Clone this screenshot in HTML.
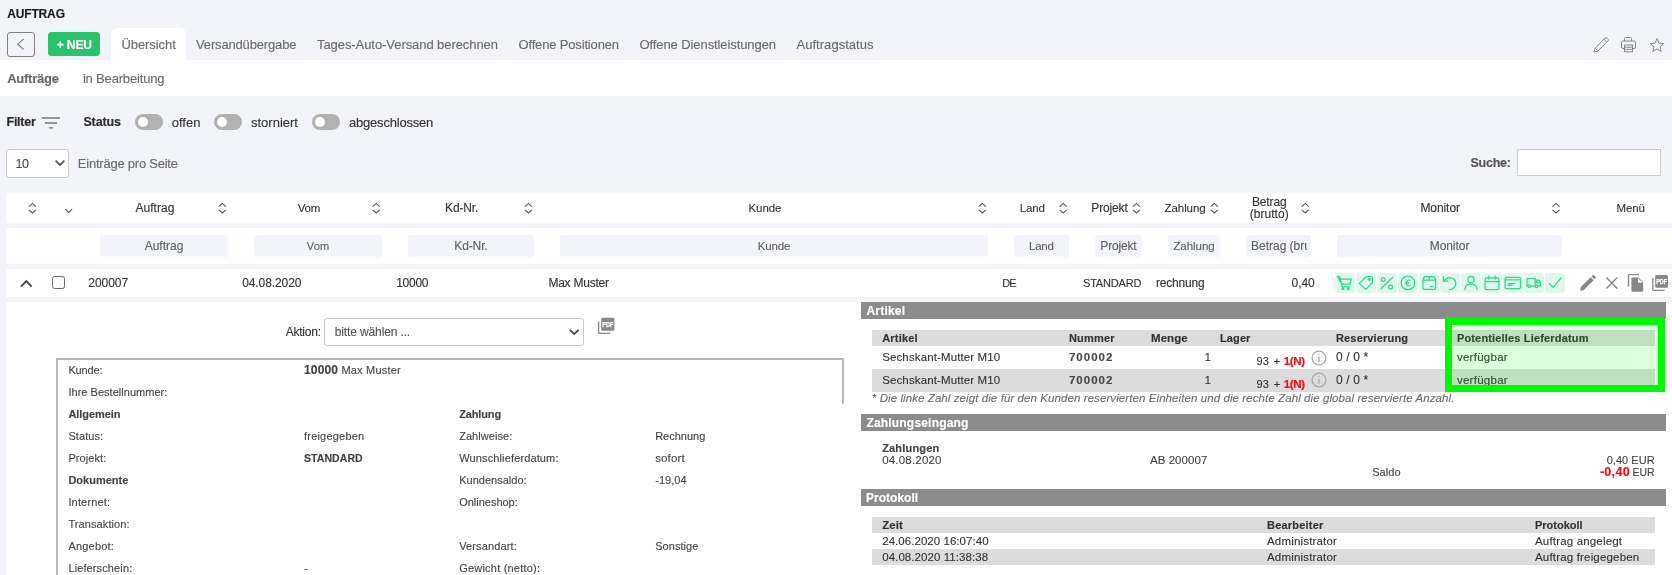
<!DOCTYPE html>
<html lang="de">
<head>
<meta charset="utf-8">
<title>Auftrag</title>
<style>
*{box-sizing:border-box;margin:0;padding:0}
html,body{width:1672px;height:575px;overflow:hidden;background:#f3f4fa;font-family:"Liberation Sans",sans-serif}
#pg{will-change:transform;position:relative;width:1672px;height:575px;overflow:hidden;background:#f3f4fa}
.b{position:absolute}
.w{position:absolute;background:#fff}
.t{position:absolute;white-space:pre;line-height:16px;height:16px;-webkit-text-stroke:0.12px}
.fi{position:absolute;background:#f3f4fa;border-radius:3px;height:22px;top:235px}
.tg{position:absolute;width:28px;height:16px;border-radius:8px;background:#b1b1b1;top:114px}
.tg i{position:absolute;left:3px;top:3px;width:10px;height:10px;border-radius:5px;background:#fff}
.bar{position:absolute;left:861px;width:804.6px;height:17px;background:#8c8c8c}
.gr{position:absolute;left:872px;width:783px;background:#dcdcdc}
.mi{position:absolute;top:273px;width:20px;height:20px;border-radius:3.5px;background:#e0f8ec}
.mi svg{position:absolute;left:0;top:0;width:20px;height:20px;fill:none;stroke:#2cda88;stroke-width:1.25;stroke-linecap:round;stroke-linejoin:round}
svg.s{position:absolute;overflow:visible}
</style>
</head>
<body>
<div id="pg">
<!-- top -->
<div class="w" style="left:111px;top:28px;width:75px;height:33px;border-radius:6px 6px 0 0"></div>
<div class="w" style="left:0;top:60px;width:1672px;height:36px"></div>
<div class="b" style="left:7px;top:32px;width:28px;height:25px;border:1px solid #808080;border-radius:3px"></div>
<svg class="s" style="left:7px;top:32px" width="28" height="25"><path d="M16.6 6.8 L10.8 12.2 L16.6 17.4" fill="none" stroke="#777" stroke-width="1.1"/></svg>
<div class="b" style="left:48px;top:32px;width:52px;height:24px;border-radius:3.5px;background:#28c36a"></div>
<!-- top-right icons -->
<svg class="s" style="left:1592px;top:36px" width="18" height="18" fill="none" stroke="#828282" stroke-width="0.95" stroke-linejoin="round"><path d="M2 16 L3.2 12.2 L13 2.2 Q14 1.3 15 2.2 L16 3.2 Q16.8 4.2 15.9 5.1 L5.9 15 Z M3.2 12.2 L5.9 15 M12 3.3 L14.9 6.1"/></svg>
<svg class="s" style="left:1620px;top:36px" width="18" height="18" fill="none" stroke="#828282" stroke-width="0.95" stroke-linejoin="round"><path d="M4.5 5 V2.5 Q4.5 1.5 5.5 1.5 H10.5 Q11.5 1.5 11.5 2.5 V5"/><rect x="1.5" y="5" width="14" height="7.5" rx="1.5"/><rect x="4.5" y="9" width="8" height="6.8" fill="#f3f4fa"/><path d="M4.5 11.2 H12.5 M4.5 13.4 H12.5"/></svg>
<svg class="s" style="left:1649px;top:37px" width="16" height="16" fill="none" stroke="#828282" stroke-width="0.95" stroke-linejoin="round"><path d="M8 1.6 L9.9 6.1 L14.7 6.5 L11 9.7 L12.2 14.5 L8 11.9 L3.8 14.5 L5 9.7 L1.3 6.5 L6.1 6.1 Z"/></svg>
<!-- filter line -->
<svg class="s" style="left:41px;top:115px" width="20" height="15" stroke="#777" stroke-width="1.3"><path d="M0.9 3 H19.1 M3.9 8 H16.1 M7.9 12.9 H12.1"/></svg>
<div class="tg" style="left:135px"><i></i></div>
<div class="tg" style="left:214px"><i></i></div>
<div class="tg" style="left:312px"><i></i></div>
<div class="w" style="left:6px;top:149px;width:63px;height:28.5px;border:1px solid #c9c9c9;border-radius:3px"></div>
<svg class="s" style="left:54px;top:158px" width="12" height="10" fill="none" stroke="#555" stroke-width="1.8"><path d="M1.6 2.6 L6 6.9 L10.4 2.6"/></svg>
<div class="w" style="left:1517px;top:149px;width:144px;height:27px;border:1px solid #cdcdcd;border-radius:0"></div>
<!-- table rows -->
<div class="w" style="left:6px;top:193px;width:1666px;height:30px"></div>
<div class="w" style="left:6px;top:228px;width:1666px;height:36px"></div>
<div class="w" style="left:6px;top:269px;width:1666px;height:28px"></div>
<div class="w" style="left:6px;top:302px;width:1666px;height:273px"></div>
<!-- sort icons -->
<svg class="s" style="left:0;top:193px" width="1672" height="30" fill="none" stroke="#555" stroke-width="1.1">
<path d="M65.3 16.2 L68.7 19.4 L72.1 16.2"/>
<path d="M29.0 13.6 l3.5 -3.2 l3.5 3.2 M29.0 16.8 l3.5 3.2 l3.5 -3.2"/><path d="M218.8 13.6 l3.5 -3.2 l3.5 3.2 M218.8 16.8 l3.5 3.2 l3.5 -3.2"/><path d="M372.7 13.6 l3.5 -3.2 l3.5 3.2 M372.7 16.8 l3.5 3.2 l3.5 -3.2"/><path d="M524.9 13.6 l3.5 -3.2 l3.5 3.2 M524.9 16.8 l3.5 3.2 l3.5 -3.2"/><path d="M978.8 13.6 l3.5 -3.2 l3.5 3.2 M978.8 16.8 l3.5 3.2 l3.5 -3.2"/><path d="M1059.7 13.6 l3.5 -3.2 l3.5 3.2 M1059.7 16.8 l3.5 3.2 l3.5 -3.2"/><path d="M1132.9 13.6 l3.5 -3.2 l3.5 3.2 M1132.9 16.8 l3.5 3.2 l3.5 -3.2"/><path d="M1210.8 13.6 l3.5 -3.2 l3.5 3.2 M1210.8 16.8 l3.5 3.2 l3.5 -3.2"/><path d="M1301.8 13.6 l3.5 -3.2 l3.5 3.2 M1301.8 16.8 l3.5 3.2 l3.5 -3.2"/><path d="M1552.5 13.6 l3.5 -3.2 l3.5 3.2 M1552.5 16.8 l3.5 3.2 l3.5 -3.2"/>
</svg>
<!-- filter inputs -->
<div class="fi" style="left:100px;width:128px"></div>
<div class="fi" style="left:254px;width:128px"></div>
<div class="fi" style="left:408px;width:126px"></div>
<div class="fi" style="left:560px;width:428px"></div>
<div class="fi" style="left:1014px;width:55px"></div>
<div class="fi" style="left:1095px;width:47px"></div>
<div class="fi" style="left:1168px;width:52px"></div>
<div class="fi" style="left:1246px;width:65px"></div>
<div class="fi" style="left:1337px;width:225px"></div>
<!-- data row -->
<svg class="s" style="left:18px;top:277px" width="16" height="12" fill="none" stroke="#444" stroke-width="1.9"><path d="M2.9 9.6 L8.3 4.2 L13.7 9.6"/></svg>
<div class="w" style="left:52px;top:275.5px;width:13px;height:13px;border:1px solid #6b6b6b;border-radius:2.5px"></div>
<div class="mi" style="left:1335px"><svg viewBox="0 0 20 20"><path d="M2.7 3.4 H4.3 L5.3 6.1 H16.3 L15.3 11.2 H6.6 Z M5.3 6.1 L6.6 11.2 L6.9 13.8 H14.9"/><circle cx="7.9" cy="15.7" r="0.9"/><circle cx="13.3" cy="15.7" r="0.9"/></svg></div>
<div class="mi" style="left:1356px"><svg viewBox="0 0 20 20"><path d="M3.3 10.4 L10 3.6 H15.6 Q16.4 3.6 16.4 4.4 V9.6 L9.9 16.4 Z"/><circle cx="13.4" cy="6.5" r="0.8"/></svg></div>
<div class="mi" style="left:1377px"><svg viewBox="0 0 20 20"><path d="M4 15.7 L15.8 4.3"/><circle cx="6.2" cy="6.5" r="1.9"/><circle cx="13.6" cy="14" r="1.9"/></svg></div>
<div class="mi" style="left:1398px"><svg viewBox="0 0 20 20"><circle cx="9.9" cy="9.9" r="6.8"/><path d="M12 7.6 Q10.9 6.6 9.6 7.2 Q8.3 8 8.3 9.9 Q8.3 11.8 9.6 12.6 Q10.9 13.2 12 12.2 M7.2 9.2 H10.6 M7.2 10.7 H10.6" stroke-width="1.1"/></svg></div>
<div class="mi" style="left:1419px"><svg viewBox="0 0 20 20"><path d="M3.9 7.2 L5.2 3.6 H15.3 L16.6 7.2 V15.6 Q16.6 16.4 15.8 16.4 H4.7 Q3.9 16.4 3.9 15.6 Z M3.9 7.2 H16.6 M10.2 3.6 V7.2 M11.6 13.6 H14.2"/></svg></div>
<div class="mi" style="left:1440px"><svg viewBox="0 0 20 20"><path d="M3.4 3.6 V8.2 H8 M3.8 8 Q6.5 4.4 10.2 4.6 Q15.6 5.2 15.8 10.4 Q15.6 15.6 9.6 16.6"/></svg></div>
<div class="mi" style="left:1461px"><svg viewBox="0 0 20 20"><circle cx="10" cy="6.6" r="3.2"/><path d="M4 16.6 Q4.2 11 10 10.8 Q15.8 11 16 16.6"/></svg></div>
<div class="mi" style="left:1482px"><svg viewBox="0 0 20 20"><rect x="3.1" y="4.9" width="13.8" height="11.7" rx="1.6"/><path d="M3.1 8.5 H16.9 M6.8 3.1 V6.2 M13.2 3.1 V6.2"/></svg></div>
<div class="mi" style="left:1503px"><svg viewBox="0 0 20 20"><rect x="2.1" y="4.4" width="15.4" height="11.2" rx="1.4"/><path d="M2.1 6.9 H17.5 M5 10.5 H11.6 M5 12.4 H9"/></svg></div>
<div class="mi" style="left:1524px"><svg viewBox="0 0 20 20"><path d="M4 13 H3 V6.2 Q3 5.5 3.7 5.5 H11.2 V13 H6.6 M11.2 7 H14.6 L16.6 9.6 V13 H14 M11.2 13 H11.4 M12.6 7.4 V9.8 H16.2"/><circle cx="5.3" cy="13.2" r="1.3"/><circle cx="12.7" cy="13.2" r="1.3"/></svg></div>
<div class="mi" style="left:1545px"><svg viewBox="0 0 20 20"><path d="M4.4 10.6 L8.2 14.4 L16.2 4.9"/></svg></div>
<svg class="s" style="left:1578px;top:272px" width="92" height="22" fill="#888" stroke="none">
<path d="M2.2 17.6 L2.8 15 L12.6 5.2 L15.6 8.2 L5.8 18 L3.2 18.7 Q2 18.9 2.2 17.6 Z M13.4 4.4 L14.6 3.2 Q15.3 2.6 16 3.2 L17.5 4.7 Q18.1 5.4 17.5 6.1 L16.4 7.3 Z"/>
<path d="M28.4 5.4 L39.3 16.6 M39.3 5.4 L28.4 16.6" fill="none" stroke="#888" stroke-width="1.4"/>
<path d="M50.5 14.8 V3.6 Q50.5 2.6 51.5 2.6 H60.8" fill="none" stroke="#888" stroke-width="1.4"/>
<path d="M54.6 5.4 H60.4 L65.2 10.2 V18.6 Q65.2 19.8 64 19.8 H54.6 Q53.4 19.8 53.4 18.6 V6.6 Q53.4 5.4 54.6 5.4 Z"/>
<path d="M60 6.2 V10.8 H64.6 Z" fill="#fff"/>
<path d="M74.8 6.2 V17.4 Q74.8 18.4 75.8 18.4 H86.6" fill="none" stroke="#888" stroke-width="1.4"/>
<rect x="77.2" y="3" width="12.8" height="12.8" rx="1.2"/>
<text x="83.65" y="11.8" font-family="Liberation Sans, sans-serif" font-size="6.6" font-weight="700" fill="#fff" stroke="#fff" stroke-width="0.25" text-anchor="middle" textLength="11" lengthAdjust="spacingAndGlyphs">PDF</text>
</svg>
<svg class="s" style="left:596px;top:315px" width="22" height="22" fill="#888" stroke="none">
<path d="M2.6 6.6 V17.4 Q2.6 18.4 3.6 18.4 H14.2" fill="none" stroke="#888" stroke-width="1.4"/>
<rect x="5.2" y="2.8" width="13.2" height="13" rx="1.2"/>
<text x="11.8" y="11.6" font-family="Liberation Sans, sans-serif" font-size="6.6" font-weight="700" fill="#fff" stroke="#fff" stroke-width="0.25" text-anchor="middle" textLength="11" lengthAdjust="spacingAndGlyphs">PDF</text>
</svg>
<!-- detail left -->
<div class="w" style="left:324px;top:318px;width:259.5px;height:27.5px;border:1px solid #c9c9c9;border-radius:3px"></div>
<svg class="s" style="left:568px;top:327px" width="12" height="10" fill="none" stroke="#444" stroke-width="1.8"><path d="M1.8 2.8 L6.2 7 L10.6 2.8"/></svg>
<div class="b" style="left:56px;top:358px;width:788px;height:2px;background:#b7b7b7"></div>
<div class="b" style="left:56px;top:358px;width:2px;height:217px;background:#b7b7b7"></div>
<div class="b" style="left:842px;top:358px;width:2px;height:45.5px;background:#b7b7b7"></div>
<!-- detail right -->
<div class="bar" style="top:302px"></div>
<div class="bar" style="top:414px"></div>
<div class="bar" style="top:489px"></div>
<div class="gr" style="top:330px;height:16px"></div>
<div class="gr" style="top:369px;height:22.5px"></div>
<div class="gr" style="top:517px;height:16px"></div>
<div class="gr" style="top:549px;height:15.5px"></div>
<svg class="s" style="left:1310.5px;top:349.5px" width="16" height="16" fill="none" stroke="#a8a8a8" stroke-width="1.3"><circle cx="8" cy="8" r="6.9"/><path d="M8 6.5 V11.8" stroke-width="1.3"/><circle cx="8" cy="4.6" r="0.7" fill="#aaa" stroke="none"/></svg>
<svg class="s" style="left:1310.5px;top:372.4px" width="16" height="16" fill="none" stroke="#a8a8a8" stroke-width="1.3"><circle cx="8" cy="8" r="6.9"/><path d="M8 6.5 V11.8" stroke-width="1.3"/><circle cx="8" cy="4.6" r="0.7" fill="#aaa" stroke="none"/></svg>
<span class="t" style="left:7.2px;top:6px;font-size:12px;color:#1c1c1c;font-weight:700;-webkit-text-stroke:0.15px;letter-spacing:-0.145px;">AUFTRAG</span>
<span class="t" style="left:121.5px;top:37px;font-size:13px;color:#6a6a6a;letter-spacing:-0.078px;">Übersicht</span>
<span class="t" style="left:196.0px;top:37px;font-size:13px;color:#6a6a6a;letter-spacing:-0.154px;">Versandübergabe</span>
<span class="t" style="left:317.0px;top:37px;font-size:13px;color:#6a6a6a;letter-spacing:-0.069px;">Tages-Auto-Versand berechnen</span>
<span class="t" style="left:518.5px;top:37px;font-size:13px;color:#6a6a6a;letter-spacing:-0.164px;">Offene Positionen</span>
<span class="t" style="left:639.5px;top:37px;font-size:13px;color:#6a6a6a;letter-spacing:-0.092px;">Offene Dienstleistungen</span>
<span class="t" style="left:796.5px;top:37px;font-size:13px;color:#6a6a6a;letter-spacing:0.033px;">Auftragstatus</span>
<span class="t" style="left:56.7px;top:37px;font-size:12px;color:#fff;font-weight:700;-webkit-text-stroke:0.15px;letter-spacing:-0.097px;">+ NEU</span>
<span class="t" style="left:7.2px;top:71px;font-size:13px;color:#6a6a6a;font-weight:700;-webkit-text-stroke:0.15px;letter-spacing:-0.250px;">Aufträge</span>
<span class="t" style="left:82.9px;top:71px;font-size:13px;color:#6a6a6a;letter-spacing:-0.173px;">in Bearbeitung</span>
<span class="t" style="left:6.5px;top:114px;font-size:12.5px;color:#2a2a2a;font-weight:700;-webkit-text-stroke:0.15px;letter-spacing:-0.252px;">Filter</span>
<span class="t" style="left:83.4px;top:114px;font-size:12.5px;color:#2a2a2a;font-weight:700;-webkit-text-stroke:0.15px;letter-spacing:-0.121px;">Status</span>
<span class="t" style="left:171.7px;top:115px;font-size:13px;color:#333;letter-spacing:0.028px;">offen</span>
<span class="t" style="left:251.0px;top:115px;font-size:13px;color:#333;">storniert</span>
<span class="t" style="left:349.0px;top:115px;font-size:13px;color:#333;letter-spacing:-0.203px;">abgeschlossen</span>
<span class="t" style="left:15.6px;top:156px;font-size:12.5px;color:#4a4a4a;letter-spacing:-0.506px;">10</span>
<span class="t" style="left:77.8px;top:156px;font-size:13px;color:#6a6a6a;letter-spacing:-0.228px;">Einträge pro Seite</span>
<span class="t" style="left:1470.5px;top:155px;font-size:12.5px;color:#555;font-weight:700;-webkit-text-stroke:0.15px;letter-spacing:-0.237px;">Suche:</span>
<span class="t" style="left:135.4px;top:200px;font-size:12px;color:#333;letter-spacing:0.049px;">Auftrag</span>
<span class="t" style="left:297.7px;top:200px;font-size:11.5px;color:#333;letter-spacing:-0.208px;">Vom</span>
<span class="t" style="left:445.0px;top:200px;font-size:12px;color:#333;letter-spacing:-0.123px;">Kd-Nr.</span>
<span class="t" style="left:748.5px;top:200px;font-size:11.5px;color:#333;letter-spacing:-0.091px;">Kunde</span>
<span class="t" style="left:1019.7px;top:200px;font-size:11.5px;color:#333;letter-spacing:-0.098px;">Land</span>
<span class="t" style="left:1091.3px;top:200px;font-size:12px;color:#333;letter-spacing:-0.143px;">Projekt</span>
<span class="t" style="left:1164.6px;top:200px;font-size:11.5px;color:#333;letter-spacing:-0.094px;">Zahlung</span>
<span class="t" style="left:1420.4px;top:200px;font-size:12px;color:#333;letter-spacing:-0.069px;">Monitor</span>
<span class="t" style="left:1616.5px;top:200px;font-size:11.5px;color:#333;letter-spacing:-0.094px;">Menü</span>
<span class="t" style="left:1251.9px;top:194px;font-size:12px;color:#333;letter-spacing:-0.112px;">Betrag</span>
<span class="t" style="left:1249.8px;top:206px;font-size:12px;color:#333;letter-spacing:0.030px;">(brutto)</span>
<span class="t" style="left:144.7px;top:238px;font-size:12px;color:#606060;">Auftrag</span>
<span class="t" style="left:306.8px;top:238px;font-size:11px;color:#606060;letter-spacing:0.192px;">Vom</span>
<span class="t" style="left:454.3px;top:238px;font-size:12px;color:#606060;letter-spacing:-0.123px;">Kd-Nr.</span>
<span class="t" style="left:757.7px;top:238px;font-size:11.5px;color:#606060;letter-spacing:-0.166px;">Kunde</span>
<span class="t" style="left:1029.0px;top:238px;font-size:11.5px;color:#606060;letter-spacing:-0.231px;">Land</span>
<span class="t" style="left:1100.3px;top:238px;font-size:12px;color:#606060;letter-spacing:-0.160px;">Projekt</span>
<span class="t" style="left:1173.3px;top:238px;font-size:11.5px;color:#606060;letter-spacing:-0.027px;">Zahlung</span>
<span class="t" style="left:1429.7px;top:238px;font-size:12px;color:#606060;letter-spacing:-0.053px;">Monitor</span>
<span class="t" style="left:1251.1px;top:238px;font-size:12px;color:#606060;letter-spacing:-0.027px;width:56px;overflow:hidden;">Betrag (brutto)</span>
<span class="t" style="left:88.3px;top:275px;font-size:12px;color:#333;letter-spacing:-0.049px;">200007</span>
<span class="t" style="left:242.2px;top:275px;font-size:12px;color:#333;letter-spacing:-0.096px;">04.08.2020</span>
<span class="t" style="left:396.2px;top:275px;font-size:12px;color:#333;letter-spacing:-0.269px;">10000</span>
<span class="t" style="left:548.4px;top:275px;font-size:12px;color:#333;letter-spacing:-0.232px;">Max Muster</span>
<span class="t" style="left:1083.0px;top:275px;font-size:11px;color:#333;letter-spacing:-0.186px;">STANDARD</span>
<span class="t" style="left:1156.0px;top:275px;font-size:12px;color:#333;letter-spacing:-0.192px;">rechnung</span>
<span class="t" style="left:1291.6px;top:275px;font-size:12px;color:#333;letter-spacing:-0.053px;">0,40</span>
<span class="t" style="left:1002.2px;top:275px;font-size:11px;color:#333;letter-spacing:-0.981px;">DE</span>
<span class="t" style="left:285.7px;top:324px;font-size:12px;color:#333;letter-spacing:-0.231px;">Aktion:</span>
<span class="t" style="left:334.8px;top:324px;font-size:12px;color:#555;letter-spacing:-0.133px;">bitte wählen ...</span>
<span class="t" style="left:68.4px;top:362px;font-size:11px;color:#444;letter-spacing:-0.135px;">Kunde:</span>
<span class="t" style="left:68.4px;top:384px;font-size:11px;color:#444;letter-spacing:0.031px;">Ihre Bestellnummer:</span>
<span class="t" style="left:68.4px;top:406px;font-size:11px;color:#444;font-weight:700;-webkit-text-stroke:0.15px;letter-spacing:-0.072px;">Allgemein</span>
<span class="t" style="left:68.4px;top:428px;font-size:11px;color:#444;letter-spacing:0.075px;">Status:</span>
<span class="t" style="left:68.4px;top:450px;font-size:11px;color:#444;letter-spacing:0.072px;">Projekt:</span>
<span class="t" style="left:68.4px;top:472px;font-size:11px;color:#444;font-weight:700;-webkit-text-stroke:0.15px;">Dokumente</span>
<span class="t" style="left:68.4px;top:494px;font-size:11px;color:#444;letter-spacing:0.168px;">Internet:</span>
<span class="t" style="left:68.4px;top:516px;font-size:11px;color:#444;letter-spacing:0.098px;">Transaktion:</span>
<span class="t" style="left:68.4px;top:538px;font-size:11px;color:#444;letter-spacing:0.208px;">Angebot:</span>
<span class="t" style="left:68.4px;top:560px;font-size:11px;color:#444;letter-spacing:0.119px;">Lieferschein:</span>
<span class="t" style="left:304.0px;top:362px;font-size:12px;color:#444;font-weight:700;-webkit-text-stroke:0.15px;letter-spacing:0.156px;">10000</span>
<span class="t" style="left:341.4px;top:362px;font-size:11px;color:#444;letter-spacing:0.215px;">Max Muster</span>
<span class="t" style="left:304.0px;top:428px;font-size:11px;color:#444;letter-spacing:0.209px;">freigegeben</span>
<span class="t" style="left:304.0px;top:450px;font-size:10.5px;color:#444;font-weight:700;-webkit-text-stroke:0.15px;letter-spacing:0.080px;">STANDARD</span>
<span class="t" style="left:304.3px;top:560px;font-size:11px;color:#444;">-</span>
<span class="t" style="left:459.2px;top:406px;font-size:11px;color:#444;font-weight:700;-webkit-text-stroke:0.15px;letter-spacing:-0.130px;">Zahlung</span>
<span class="t" style="left:459.2px;top:428px;font-size:11px;color:#444;letter-spacing:0.047px;">Zahlweise:</span>
<span class="t" style="left:459.2px;top:450px;font-size:11px;color:#444;letter-spacing:0.134px;">Wunschlieferdatum:</span>
<span class="t" style="left:459.2px;top:472px;font-size:11px;color:#444;letter-spacing:0.011px;">Kundensaldo:</span>
<span class="t" style="left:459.2px;top:494px;font-size:11px;color:#444;letter-spacing:-0.012px;">Onlineshop:</span>
<span class="t" style="left:459.2px;top:538px;font-size:11px;color:#444;letter-spacing:0.133px;">Versandart:</span>
<span class="t" style="left:459.2px;top:560px;font-size:11px;color:#444;letter-spacing:0.211px;">Gewicht (netto):</span>
<span class="t" style="left:655.2px;top:428px;font-size:11px;color:#444;letter-spacing:-0.008px;">Rechnung</span>
<span class="t" style="left:655.2px;top:450px;font-size:11.5px;color:#444;letter-spacing:0.127px;">sofort</span>
<span class="t" style="left:655.2px;top:472px;font-size:11px;color:#444;letter-spacing:0.039px;">-19,04</span>
<span class="t" style="left:655.2px;top:538px;font-size:11px;color:#444;letter-spacing:0.055px;">Sonstige</span>
<span class="t" style="left:866.4px;top:303px;font-size:12px;color:#fff;font-weight:700;-webkit-text-stroke:0.15px;letter-spacing:0.223px;">Artikel</span>
<span class="t" style="left:866.4px;top:415px;font-size:12px;color:#fff;font-weight:700;-webkit-text-stroke:0.15px;letter-spacing:0.190px;">Zahlungseingang</span>
<span class="t" style="left:866.1px;top:490px;font-size:12px;color:#fff;font-weight:700;-webkit-text-stroke:0.15px;">Protokoll</span>
<span class="t" style="left:882.2px;top:330px;font-size:11px;color:#333;font-weight:700;-webkit-text-stroke:0.15px;letter-spacing:0.208px;">Artikel</span>
<span class="t" style="left:1068.9px;top:330px;font-size:11px;color:#333;font-weight:700;-webkit-text-stroke:0.15px;letter-spacing:0.215px;">Nummer</span>
<span class="t" style="left:1151.0px;top:330px;font-size:11.5px;color:#333;font-weight:700;-webkit-text-stroke:0.15px;letter-spacing:0.070px;">Menge</span>
<span class="t" style="left:1220.0px;top:330px;font-size:11px;color:#333;font-weight:700;-webkit-text-stroke:0.15px;letter-spacing:0.108px;">Lager</span>
<span class="t" style="left:1336.0px;top:330px;font-size:11px;color:#333;font-weight:700;-webkit-text-stroke:0.15px;letter-spacing:0.153px;">Reservierung</span>
<span class="t" style="left:1456.9px;top:330px;font-size:11px;color:#333;font-weight:700;-webkit-text-stroke:0.15px;letter-spacing:0.167px;">Potentielles Lieferdatum</span>
<span class="t" style="left:882.2px;top:349px;font-size:11.5px;color:#333;letter-spacing:0.122px;">Sechskant-Mutter M10</span>
<span class="t" style="left:1068.9px;top:349px;font-size:11.5px;color:#484848;font-weight:700;-webkit-text-stroke:0.15px;letter-spacing:1.025px;">700002</span>
<span class="t" style="left:1204.7px;top:349px;font-size:11px;color:#333;">1</span>
<span class="t" style="left:1256.5px;top:353px;font-size:11px;color:#333;letter-spacing:0.250px;">93</span>
<span class="t" style="left:1273.7px;top:353px;font-size:11px;color:#333;">+</span>
<span class="t" style="left:1283.8px;top:353px;font-size:11.5px;color:#fb0a12;font-weight:700;-webkit-text-stroke:0.15px;letter-spacing:-0.325px;">1(N)</span>
<span class="t" style="left:1336.0px;top:349px;font-size:12px;color:#333;letter-spacing:0.140px;">0 / 0 *</span>
<span class="t" style="left:1456.9px;top:349px;font-size:11.5px;color:#333;letter-spacing:0.276px;">verfügbar</span>
<span class="t" style="left:882.2px;top:372px;font-size:11.5px;color:#333;letter-spacing:0.122px;">Sechskant-Mutter M10</span>
<span class="t" style="left:1068.9px;top:372px;font-size:11.5px;color:#484848;font-weight:700;-webkit-text-stroke:0.15px;letter-spacing:1.025px;">700002</span>
<span class="t" style="left:1204.7px;top:372px;font-size:11px;color:#333;">1</span>
<span class="t" style="left:1256.5px;top:376px;font-size:11px;color:#333;letter-spacing:0.250px;">93</span>
<span class="t" style="left:1273.7px;top:376px;font-size:11px;color:#333;">+</span>
<span class="t" style="left:1283.8px;top:376px;font-size:11.5px;color:#fb0a12;font-weight:700;-webkit-text-stroke:0.15px;letter-spacing:-0.325px;">1(N)</span>
<span class="t" style="left:1336.0px;top:372px;font-size:12px;color:#333;letter-spacing:0.140px;">0 / 0 *</span>
<span class="t" style="left:1456.9px;top:372px;font-size:11.5px;color:#333;letter-spacing:0.276px;">verfügbar</span>
<span class="t" style="left:871.8px;top:390px;font-size:11.5px;color:#6c6c6c;font-style:italic;letter-spacing:0.084px;">* Die linke Zahl zeigt die für den Kunden reservierten Einheiten und die rechte Zahl die global reservierte Anzahl.</span>
<span class="t" style="left:882.2px;top:440px;font-size:11px;color:#444;font-weight:700;-webkit-text-stroke:0.15px;letter-spacing:0.174px;">Zahlungen</span>
<span class="t" style="left:882.2px;top:452px;font-size:11.5px;color:#444;letter-spacing:0.193px;">04.08.2020</span>
<span class="t" style="left:1150.0px;top:452px;font-size:11.5px;color:#444;letter-spacing:0.047px;">AB 200007</span>
<span class="t" style="left:1372.2px;top:464px;font-size:11px;color:#444;letter-spacing:0.090px;">Saldo</span>
<span class="t" style="left:1606.7px;top:452px;font-size:11px;color:#444;letter-spacing:0.028px;">0,40 EUR</span>
<span class="t" style="left:1599.9px;top:464px;font-size:12.5px;color:#fb0a12;font-weight:700;-webkit-text-stroke:0.15px;letter-spacing:0.300px;">-0,40</span>
<span class="t" style="left:1632.6px;top:464px;font-size:10.5px;color:#444;letter-spacing:-0.086px;">EUR</span>
<span class="t" style="left:882.2px;top:517px;font-size:11.5px;color:#333;font-weight:700;-webkit-text-stroke:0.15px;letter-spacing:0.082px;">Zeit</span>
<span class="t" style="left:882.2px;top:533px;font-size:11.5px;color:#333;letter-spacing:0.048px;">24.06.2020 16:07:40</span>
<span class="t" style="left:882.2px;top:549px;font-size:11.5px;color:#333;letter-spacing:0.068px;">04.08.2020 11:38:38</span>
<span class="t" style="left:1267.0px;top:517px;font-size:11px;color:#333;font-weight:700;-webkit-text-stroke:0.15px;letter-spacing:0.209px;">Bearbeiter</span>
<span class="t" style="left:1267.0px;top:533px;font-size:11.5px;color:#333;letter-spacing:0.179px;">Administrator</span>
<span class="t" style="left:1267.0px;top:549px;font-size:11.5px;color:#333;letter-spacing:0.179px;">Administrator</span>
<span class="t" style="left:1535.0px;top:517px;font-size:11px;color:#333;font-weight:700;-webkit-text-stroke:0.15px;">Protokoll</span>
<span class="t" style="left:1535.0px;top:533px;font-size:11.5px;color:#333;letter-spacing:0.173px;">Auftrag angelegt</span>
<span class="t" style="left:1535.0px;top:549px;font-size:11.5px;color:#333;letter-spacing:0.176px;">Auftrag freigegeben</span>
<!-- highlight -->
<div class="b" style="left:1445px;top:318px;width:220px;height:74px;border:7px solid #00f900;background:rgba(0,255,0,.13)"></div>
</div>
</body>
</html>
